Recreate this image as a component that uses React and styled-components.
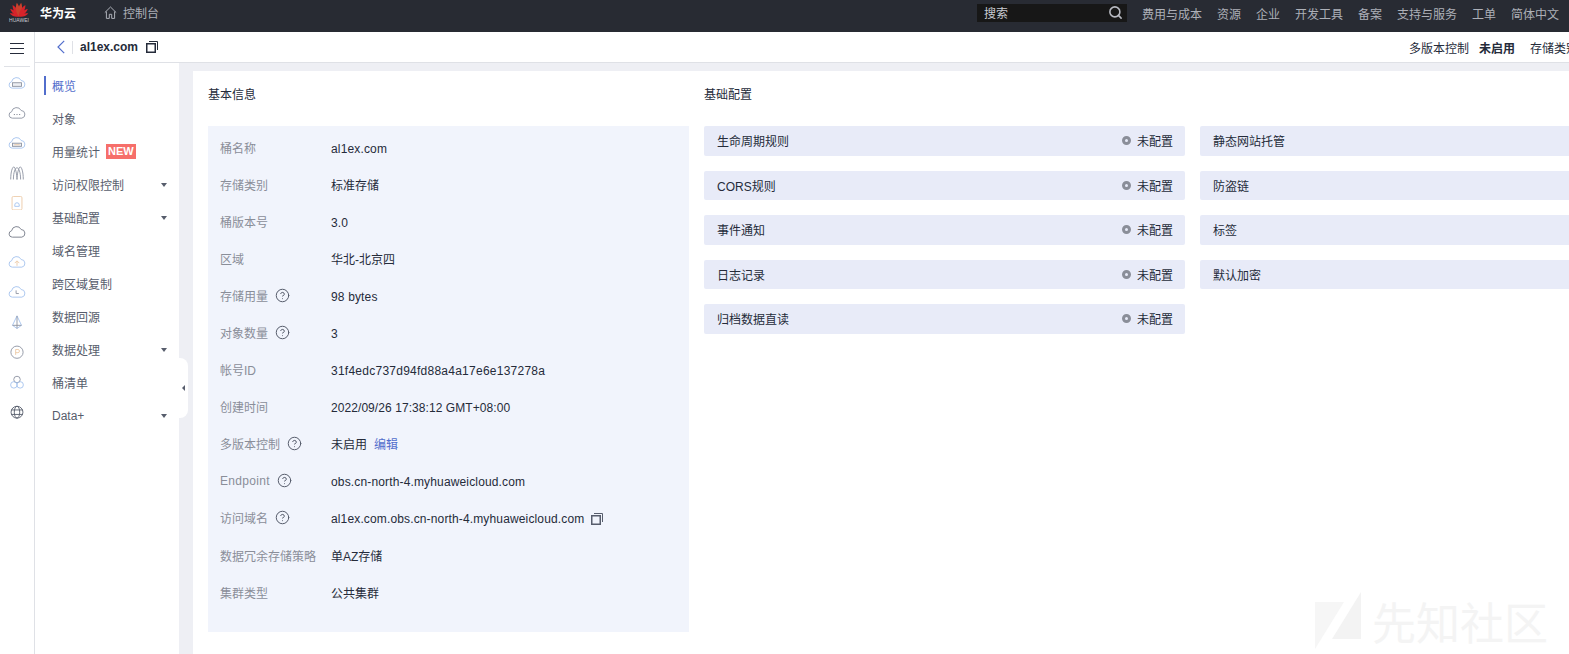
import React from 'react';
import styled, { createGlobalStyle } from 'styled-components';
import { CircleHelp, Search } from 'lucide-react';

const GlobalStyle = createGlobalStyle`
  html, body {
    margin: 0;
    padding: 0;
    background: #fff;
  }

  body {
    font-family: "Liberation Sans", "Noto Sans CJK SC", sans-serif;
    font-size: 12px;
    color: #252b3a;
  }

  * {
    box-sizing: border-box;
  }
`;

const Page = styled.div`
  position: relative;
  display: flex;
  flex-direction: column;
  width: 100%;
  height: 654px;
  overflow: hidden;
`;

const Topbar = styled.header`
  display: flex;
  flex: none;
  justify-content: space-between;
  height: 32px;
  padding: 0 10px 0 9px;
  background: #282b33;
`;

const TopLeft = styled.div`
  display: flex;
  align-items: flex-start;
`;

const LogoBox = styled.div`
  display: flex;
  flex-direction: column;
  align-items: center;
  width: 20px;
  margin-top: 2px;
  color: #c9cbd2;
  font-size: 5px;
  line-height: 6px;

  svg {
    display: block;
  }
`;

const Brand = styled.span`
  margin: 5px 0 0 11px;
  line-height: 18px;
  color: #fff;
  font-weight: bold;
`;

const Console = styled.span`
  display: flex;
  align-items: center;
  gap: 6px;
  height: 18px;
  margin: 3px 0 0 28px;
  color: #adb0b8;
`;

const TopRight = styled.div`
  display: flex;
  align-items: flex-start;
  gap: 15px;
`;

const SearchBox = styled.div`
  display: flex;
  align-items: center;
  justify-content: space-between;
  width: 150px;
  height: 18px;
  margin-top: 4px;
  padding: 0 4px 2px 7px;
  background: #171717;
  color: #c9cbd2;
`;

const TopLink = styled.span`
  margin-top: 6px;
  line-height: 18px;
  color: #adb0b8;
`;

const Body = styled.div`
  display: flex;
  flex: 1;
  min-height: 0;
`;

const Rail = styled.aside`
  display: flex;
  flex: none;
  flex-direction: column;
  align-items: center;
  width: 35px;
  border-right: 1px solid #dfe1e6;
`;

const Burger = styled.div`
  display: flex;
  flex-direction: column;
  justify-content: space-between;
  width: 14px;
  height: 11px;
  margin-top: 11px;

  span {
    display: block;
    height: 1px;
    background: #252b3a;
  }
`;

const RailRule = styled.div`
  width: 26px;
  height: 1px;
  margin: 12px 0 1px;
  background: #dfe1e6;
`;

const RailIcon = styled.div`
  display: flex;
  align-items: center;
  justify-content: center;
  height: 29.95px;
  width: 100%;
`;

const Main = styled.div`
  display: flex;
  flex: 1;
  flex-direction: column;
  min-width: 0;
`;

const SubHeader = styled.div`
  display: flex;
  flex: none;
  align-items: center;
  height: 31px;
  border-bottom: 1px solid #dfe1e6;
  overflow: hidden;
  white-space: nowrap;
`;

const SubLeft = styled.div`
  display: flex;
  flex: none;
  align-items: center;
  width: 1374px;
  padding-left: 22px;
`;

const Divider = styled.span`
  width: 1px;
  height: 13px;
  margin: 0 7px;
  background: #dfe1e6;
`;

const BucketName = styled.strong`
  margin-right: 8px;
`;

const SubRight = styled.div`
  display: flex;
  flex: none;
  align-items: center;
`;

const SubLabel = styled.span`
  margin-right: 10px;
`;

const SubValue = styled.span`
  margin-right: 15px;
  font-weight: ${(p) => (p.$plain ? 'normal' : 'bold')};
`;

const Columns = styled.div`
  position: relative;
  display: flex;
  flex: 1;
  min-height: 0;
`;

const SideNav = styled.nav`
  flex: none;
  width: 144px;
  padding: 6px 0 0 9px;
`;

const NavItem = styled.div`
  position: relative;
  display: flex;
  align-items: center;
  height: 33px;
  padding: 0 12px 0 8px;
  color: ${(p) => (p.$active ? '#526ecc' : '#575d6c')};

  &::before {
    content: '';
    display: ${(p) => (p.$active ? 'block' : 'none')};
    position: absolute;
    left: 0;
    top: 7px;
    width: 2px;
    height: 19px;
    background: #526ecc;
  }
`;

const NewBadge = styled.span`
  margin-left: 6px;
  padding: 0 2px;
  height: 15px;
  background: #f66f6a;
  color: #fff;
  font-size: 11px;
  font-weight: bold;
  line-height: 15px;
`;

const Caret = styled.span`
  margin-left: auto;
  border-style: solid;
  border-width: 4px 3px 0;
  border-color: #575d6c transparent transparent;
`;

const Collapse = styled.div`
  position: absolute;
  left: 144px;
  top: 295px;
  display: flex;
  align-items: center;
  justify-content: center;
  width: 9px;
  height: 60px;
  background: #fff;
  border-radius: 0 8px 8px 0;

  &::after {
    content: '';
    border-style: solid;
    border-width: 3px 3px 3px 0;
    border-color: transparent #575d6c transparent transparent;
  }
`;

const Content = styled.main`
  flex: 1;
  min-width: 0;
  padding: 8px 0 0 14px;
  background: #eeeff4;
  overflow: hidden;
`;

const Panel = styled.div`
  display: flex;
  gap: 15px;
  height: 100%;
  padding: 15px 0 0 15px;
  background: #fff;
`;

const Section = styled.section`
  flex: none;
  width: ${(p) => p.$width}px;
`;

const Title = styled.h2`
  margin: 0 0 22px;
  font-size: 12px;
  font-weight: normal;
  line-height: 18px;
  color: #252b3a;
`;

const InfoBox = styled.div`
  height: 506px;
  padding: 3px 12px 0;
  background: #f1f4fc;
`;

const InfoRow = styled.div`
  display: flex;
  align-items: center;
  height: 37.05px;
`;

const InfoLabel = styled.div`
  display: flex;
  flex: none;
  align-items: center;
  gap: 7px;
  width: 111px;
  color: #8a8e99;
  letter-spacing: ${(p) => p.$tracking || 0}px;
  white-space: nowrap;

  svg {
    color: #575d6c;
  }
`;

const InfoValue = styled.div`
  display: flex;
  align-items: center;
  gap: 7px;
  padding-top: ${(p) => (p.$tracking ? '2px' : '0')};
  color: #252b3a;
  letter-spacing: ${(p) => p.$tracking || 0}px;
`;

const EditLink = styled.span`
  color: #526ecc;
`;

const ConfigGrid = styled.div`
  display: grid;
  grid-template-columns: 481px 481px;
  grid-auto-rows: 29.5px;
  column-gap: 15px;
  row-gap: 15px;
`;

const ConfigItem = styled.div`
  display: flex;
  align-items: center;
  justify-content: space-between;
  padding: 0 12px 0 13px;
  background: #e8ebf8;
  border-radius: 2px;
  color: #252b3a;
`;

const Status = styled.span`
  display: flex;
  align-items: center;
  gap: 6px;
`;

const StatusDot = styled.i`
  width: 9px;
  height: 9px;
  border: 3px solid #8a8e99;
  border-radius: 50%;
  background: #e8ebf8;
`;

const Watermark = styled.div`
  position: absolute;
  right: 21px;
  bottom: 4px;
  display: flex;
  align-items: center;
  gap: 11px;
  color: #f4f4f4;
  font-family: "Noto Sans CJK SC", sans-serif;
  font-size: 44px;
  line-height: 54px;
  pointer-events: none;
`;

const PETALS = [
  { a: -72, s: 0.7 },
  { a: -50, s: 0.82 },
  { a: -29, s: 0.94 },
  { a: -9, s: 1 },
  { a: 9, s: 1 },
  { a: 29, s: 0.94 },
  { a: 50, s: 0.82 },
  { a: 72, s: 0.7 },
];

const HuaweiLogo = () => (
  <LogoBox>
    <svg width="20" height="15" viewBox="0 0 20 15">
      {PETALS.map(({ a, s }) => (
        <path
          key={a}
          d="M10 14.5C7.4 10.5 7.6 4.5 10 .5C12.4 4.5 12.6 10.5 10 14.5Z"
          fill={Math.abs(a) === 9 ? '#c9412c' : '#d8232a'}
          transform={`rotate(${a} 10 14.5) translate(10 14.5) scale(${s}) translate(-10 -14.5)`}
        />
      ))}
    </svg>
    <span>HUAWEI</span>
  </LogoBox>
);

const HomeIcon = () => (
  <svg width="13" height="13" viewBox="0 0 13 13" fill="none" stroke="#adb0b8" strokeWidth="1">
    <path d="M.8 6.6 6.5 1l5.7 5.6" />
    <path d="M2.4 5.5v6.9h2.9V8.3h2.4v4.1h2.9V5.5" />
  </svg>
);

const BackIcon = () => (
  <svg width="8" height="14" viewBox="0 0 8 14" fill="none" stroke="#526ecc" strokeWidth="1.2">
    <path d="M7.2.8 1 7l6.2 6.2" />
  </svg>
);

const CopyIcon = ({ color = '#252b3a' }) => (
  <svg width="12" height="12" viewBox="0 0 12 12" fill="none" stroke={color} strokeWidth="1">
    <rect x="0.75" y="2.75" width="8.5" height="8.5" strokeWidth="1.5" />
    <path d="M3 .5h8.5V9" />
  </svg>
);

const CLOUD = 'M5.2 13.5H4.6a3.6 3.6 0 0 1-.6-7.1A5.6 5.6 0 0 1 14.6 5a4.3 4.3 0 0 1 .8 8.5Z';
const GREY = '#8d93a1';
const BLUE = '#a5c3ee';
const ORANGE = '#ecc9a6';

// left rail service icons, all hand drawn around the same cloud shape
const railIcons = [
  <>
    <path d={CLOUD} stroke={BLUE} />
    <rect x="5" y="7.5" width="10" height="4" stroke={GREY} fill="#eceef2" />
  </>,
  <>
    <path d={CLOUD} stroke={GREY} />
    <path d="M6.5 9.5h1M9.5 9.5h1M12.5 9.5h1" stroke="#575d6c" />
  </>,
  <>
    <path d={CLOUD} stroke={BLUE} />
    <rect x="5" y="8" width="10" height="3.5" stroke={GREY} fill="#eceef2" />
    <path d="M7 9.7h6" stroke={ORANGE} />
  </>,
  <path d="M3 15C3 6 5 1 6.5 1S10 9 10 15M10 15C10 9 12 1 13.5 1S17 6 17 15M6 15C6 7 8 2 10 2S14 7 14 15" stroke={GREY} />,
  <>
    <rect x="4.5" y="0.5" width="11" height="15" rx="1.5" stroke={ORANGE} />
    <path d="M7.5 10a2.5 2.5 0 0 1 5 0v1.5h-5Z" stroke={BLUE} />
  </>,
  <path d={CLOUD} stroke="#757a88" />,
  <>
    <path d={CLOUD} stroke={BLUE} />
    <path d="M10 12V7M7.5 9 10 6.5 12.5 9" stroke={ORANGE} />
  </>,
  <>
    <path d={CLOUD} stroke={BLUE} />
    <path d="M9 6v3.5h3" stroke={GREY} />
  </>,
  <>
    <path d="M10 1 15 11.5 10 15 5 11.5Z" stroke={BLUE} />
    <path d="M10 1v14M5 11.5h10" stroke={GREY} />
  </>,
  <>
    <circle cx="10" cy="8" r="6.8" stroke={GREY} />
    <path d="M8.5 11V5h2.5a1.5 1.5 0 0 1 0 3.5H8.5" stroke={ORANGE} />
  </>,
  <>
    <circle cx="10" cy="5" r="3.6" stroke={GREY} />
    <circle cx="6.5" cy="11" r="3.6" stroke={BLUE} />
    <circle cx="13.5" cy="11" r="3.6" stroke={BLUE} />
  </>,
  <>
    <circle cx="10" cy="8" r="6.6" stroke="#575d6c" />
    <ellipse cx="10" cy="8" rx="3" ry="6.6" stroke="#575d6c" />
    <path d="M3.5 5.5h13M3.5 10.5h13" stroke="#575d6c" />
  </>,
];

const navItems = [
  { label: '概览', active: true },
  { label: '对象' },
  { label: '用量统计', badge: 'NEW' },
  { label: '访问权限控制', caret: true },
  { label: '基础配置', caret: true },
  { label: '域名管理' },
  { label: '跨区域复制' },
  { label: '数据回源' },
  { label: '数据处理', caret: true },
  { label: '桶清单' },
  { label: 'Data+', caret: true },
];

const infoRows = [
  { label: '桶名称', value: 'al1ex.com', tracking: 0.15 },
  { label: '存储类别', value: '标准存储' },
  { label: '桶版本号', value: '3.0', tracking: 0.15 },
  { label: '区域', value: '华北-北京四' },
  { label: '存储用量', help: true, value: '98 bytes', tracking: 0.15 },
  { label: '对象数量', help: true, value: '3', tracking: 0.15 },
  { label: '帐号ID', value: '31f4edc737d94fd88a4a17e6e137278a', tracking: 0.25 },
  { label: '创建时间', value: '2022/09/26 17:38:12 GMT+08:00', tracking: 0.07 },
  { label: '多版本控制', help: true, value: '未启用', edit: true },
  { label: 'Endpoint', labelTracking: 0.3, help: true, value: 'obs.cn-north-4.myhuaweicloud.com', tracking: 0.15 },
  { label: '访问域名', help: true, value: 'al1ex.com.obs.cn-north-4.myhuaweicloud.com', tracking: 0.14, copy: true },
  { label: '数据冗余存储策略', value: '单AZ存储' },
  { label: '集群类型', value: '公共集群' },
];

const configs = [
  '生命周期规则', '静态网站托管',
  'CORS规则', '防盗链',
  '事件通知', '标签',
  '日志记录', '默认加密',
  '归档数据直读',
];

const topLinks = ['费用与成本', '资源', '企业', '开发工具', '备案', '支持与服务', '工单', '简体中文'];

const App = () => (
  <Page>
    <GlobalStyle />
    <Topbar>
      <TopLeft>
        <HuaweiLogo />
        <Brand>华为云</Brand>
        <Console>
          <HomeIcon />
          控制台
        </Console>
      </TopLeft>
      <TopRight>
        <SearchBox>
          搜索
          <Search size={15} color="#b8bac2" strokeWidth={2.5} />
        </SearchBox>
        {topLinks.map((link) => (
          <TopLink key={link}>{link}</TopLink>
        ))}
      </TopRight>
    </Topbar>
    <Body>
      <Rail>
        <Burger>
          <span />
          <span />
          <span />
        </Burger>
        <RailRule />
        {railIcons.map((icon, i) => (
          <RailIcon key={i}>
            <svg width="18" height="14.4" viewBox="0 0 20 16" fill="none">
              {icon}
            </svg>
          </RailIcon>
        ))}
      </Rail>
      <Main>
        <SubHeader>
          <SubLeft>
            <BackIcon />
            <Divider />
            <BucketName>al1ex.com</BucketName>
            <CopyIcon />
          </SubLeft>
          <SubRight>
            <SubLabel>多版本控制</SubLabel>
            <SubValue>未启用</SubValue>
            <SubLabel>存储类别</SubLabel>
            <SubValue $plain>标准存储</SubValue>
          </SubRight>
        </SubHeader>
        <Columns>
          <SideNav>
            {navItems.map((item) => (
              <NavItem key={item.label} $active={item.active}>
                {item.label}
                {item.badge && <NewBadge>{item.badge}</NewBadge>}
                {item.caret && <Caret />}
              </NavItem>
            ))}
          </SideNav>
          <Collapse />
          <Content>
            <Panel>
              <Section $width={481}>
                <Title>基本信息</Title>
                <InfoBox>
                  {infoRows.map((row) => (
                    <InfoRow key={row.label}>
                      <InfoLabel $tracking={row.labelTracking}>
                        {row.label}
                        {row.help && <CircleHelp size={15} strokeWidth={1.6} />}
                      </InfoLabel>
                      <InfoValue $tracking={row.tracking}>
                        {row.value}
                        {row.edit && <EditLink>编辑</EditLink>}
                        {row.copy && <CopyIcon color="#575d6c" />}
                      </InfoValue>
                    </InfoRow>
                  ))}
                </InfoBox>
              </Section>
              <Section $width={977}>
                <Title>基础配置</Title>
                <ConfigGrid>
                  {configs.map((name) => (
                    <ConfigItem key={name}>
                      {name}
                      <Status>
                        <StatusDot />
                        未配置
                      </Status>
                    </ConfigItem>
                  ))}
                </ConfigGrid>
              </Section>
            </Panel>
          </Content>
        </Columns>
      </Main>
    </Body>
    <Watermark>
      <svg width="46" height="58" viewBox="0 0 46 58">
        <path d="M0 10H29L0 57Z" fill="#f6f6f6" />
        <path d="M46 0V47H17Z" fill="#f3f3f3" />
      </svg>
      先知社区
    </Watermark>
  </Page>
);

export default App;
